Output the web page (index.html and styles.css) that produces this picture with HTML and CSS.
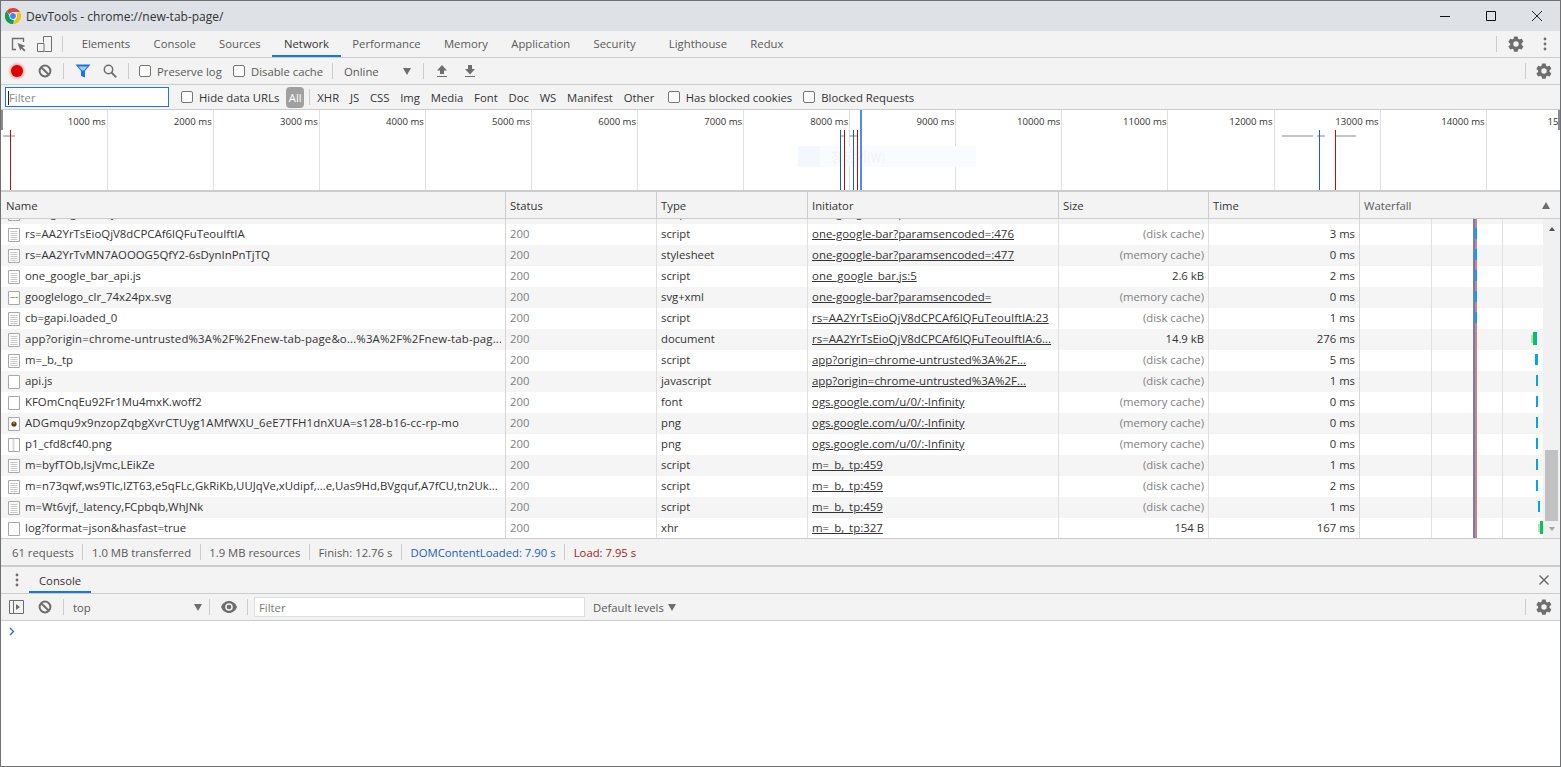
FILE: index.html
```html
<!DOCTYPE html>
<html lang="en">
<head>
<meta charset="utf-8">
<title>DevTools - chrome://new-tab-page/</title>
<link rel="stylesheet" href="styles.css">
</head>
<body>
<svg class="defs" aria-hidden="true">
  <symbol id="gear" viewBox="0 0 24 24"><path d="M19.4 13c.04-.32.07-.66.07-1s-.03-.68-.07-1l2.15-1.68c.2-.15.25-.43.12-.66l-2.04-3.53c-.12-.22-.4-.3-.62-.22l-2.54 1.02c-.53-.4-1.1-.74-1.72-1l-.39-2.7A.5.5 0 0 0 13.86 2H9.78a.5.5 0 0 0-.5.43l-.39 2.7c-.62.26-1.2.6-1.72 1L4.63 5.11c-.23-.08-.5 0-.62.22L1.97 8.86c-.13.23-.08.5.12.66L4.24 11.2c-.04.32-.08.66-.08 1s.04.68.08 1l-2.15 1.68c-.2.15-.25.43-.12.66l2.04 3.53c.12.22.4.3.62.22l2.54-1.02c.53.4 1.1.74 1.72 1l.39 2.7c.04.25.25.43.5.43h4.08c.25 0 .46-.18.5-.43l.39-2.7c.62-.26 1.2-.6 1.72-1l2.54 1.02c.23.08.5 0 .62-.22l2.04-3.53c.13-.23.08-.5-.12-.66L19.4 13zM12 15.6a3.6 3.6 0 1 1 0-7.2 3.6 3.6 0 0 1 0 7.2z"/></symbol>
  <symbol id="clear" viewBox="0 0 14 14"><circle cx="7" cy="7" r="5.4" fill="none" stroke="#6e6e6e" stroke-width="2"/><path d="M3.2 3.2l7.6 7.6" stroke="#6e6e6e" stroke-width="2"/></symbol>
  <symbol id="dots" viewBox="0 0 4 14"><circle cx="2" cy="2" r="1.4" fill="#6e6e6e"/><circle cx="2" cy="7" r="1.4" fill="#6e6e6e"/><circle cx="2" cy="12" r="1.4" fill="#6e6e6e"/></symbol>
  <symbol id="doc" viewBox="0 0 12 14"><path d="M.5.5h11v13H.5z" fill="#fff" stroke="#a8a8a8"/><path d="M2.5 3.5h7M2.5 5.5h7M2.5 7.5h7M2.5 9.5h7M2.5 11.5h7" stroke="#c8c8c8"/></symbol>
  <symbol id="blank" viewBox="0 0 12 14"><path d="M.5.5h11v13H.5z" fill="#fff" stroke="#a8a8a8"/></symbol>
  <symbol id="thin" viewBox="0 0 12 14"><path d="M.5.5h11v13H.5z" fill="#fff" stroke="#a8a8a8"/><path d="M5.5 1v12" stroke="#d8d8d8" stroke-width="2"/></symbol>
  <symbol id="svgimg" viewBox="0 0 12 14"><path d="M.5.5h11v13H.5z" fill="#fff" stroke="#a8a8a8"/><path d="M2.5 6.5h2" stroke="#5b8de8"/><path d="M4.5 6.5h2" stroke="#e06a5c"/><path d="M6.5 6.5h1.500" stroke="#e5c04a"/><path d="M8 6.500h2" stroke="#5cae6c"/></symbol>
  <symbol id="photo" viewBox="0 0 12 14"><path d="M.5.5h11v13H.5z" fill="#fff" stroke="#a8a8a8"/><circle cx="6" cy="7" r="2.600" fill="#5d3a22"/><circle cx="6" cy="6.200" r="1.100" fill="#d8742c"/></symbol>
</svg>

<div class="window">
  <header class="titlebar">
    <svg class="chrome-logo" viewBox="0 0 16 16" width="16" height="16">
      <path d="M8 0a8 8 0 0 1 6.930 4H8a4 4 0 0 0-3.700 2.500L1.600 2.900A8 8 0 0 1 8 0z" fill="#db4437"/>
      <path d="M14.930 4A8 8 0 0 1 8 16l3.460-6A4 4 0 0 0 11.500 6z" fill="#f4c20d"/>
      <path d="M8 16A8 8 0 0 1 1.600 2.900l3.460 6A4 4 0 0 0 9 11.900z" fill="#0f9d58"/>
      <circle cx="8" cy="8" r="3.600" fill="#fff"/><circle cx="8" cy="8" r="2.900" fill="#4285f4"/>
    </svg>
    <span class="title-text">DevTools - chrome://new-tab-page/</span>
    <div class="win-controls">
      <svg width="10" height="10" viewBox="0 0 10 10"><path d="M0 5.500h10" stroke="#111"/></svg>
      <svg width="10" height="10" viewBox="0 0 10 10"><path d="M.5.500h9v9h-9z" fill="none" stroke="#111"/></svg>
      <svg width="10" height="10" viewBox="0 0 10 10"><path d="M0 0l10 10M10 0L0 10" stroke="#111" stroke-width=".9"/></svg>
    </div>
  </header>

  <nav class="tabbar">
    <svg class="ic ic-inspect" width="15" height="15" viewBox="0 0 15 15"><path d="M5 12.500H1.500v-11h11V5" fill="none" stroke="#6e6e6e" stroke-width="1.300"/><path d="M6.500 6l8 3-3 1.200 3 3-1.300 1.300-3-3L9.500 14z" fill="#6e6e6e"/></svg>
    <svg class="ic ic-device" width="15" height="16" viewBox="0 0 15 16"><path d="M.5 7.500h6.500v8H.5z" fill="none" stroke="#6e6e6e"/><path d="M6.500.500h8v15H7.500" fill="none" stroke="#6e6e6e"/><path d="M6.500.500v6" stroke="#6e6e6e"/></svg>
    <i class="sep sep-tabs"></i>
    <a class="tab tab-first">Elements</a>
    <a class="tab">Console</a>
    <a class="tab">Sources</a>
    <a class="tab is-active">Network</a>
    <a class="tab">Performance</a>
    <a class="tab">Memory</a>
    <a class="tab">Application</a>
    <a class="tab">Security</a>
    <a class="tab tab-light">Lighthouse</a>
    <a class="tab">Redux</a>
    <span class="spacer"></span>
    <i class="sep sep-right"></i>
    <svg class="gear gear-main"><use href="#gear"/></svg>
    <svg class="dots-ic" width="4" height="14"><use href="#dots"/></svg>
  </nav>

  <div class="toolbar">
    <span class="record"></span>
    <svg class="clear-ic" width="14" height="14"><use href="#clear"/></svg>
    <i class="sep sep-a"></i>
    <svg class="ic-filter" width="16" height="14" viewBox="0 0 16 14"><path d="M.5.500h15L10 7v6.500l-4-1.500V7z" fill="#1a73e8"/><path d="M3.500 2.500h9L9 6.500H7z" fill="#a9cdf8"/></svg>
    <svg class="ic-search" width="14" height="14" viewBox="0 0 14 14"><circle cx="5.500" cy="5.500" r="4.200" fill="none" stroke="#6e6e6e" stroke-width="1.500"/><path d="M8.500 8.500l4.800 4.800" stroke="#6e6e6e" stroke-width="1.800"/></svg>
    <i class="sep sep-b"></i>
    <label class="check check-preserve"><i class="box"></i>Preserve log</label>
    <label class="check check-disable"><i class="box"></i>Disable cache</label>
    <i class="sep sep-c"></i>
    <span class="online">Online</span>
    <i class="tri"></i>
    <i class="sep sep-d"></i>
    <svg class="ic-up" width="12" height="12" viewBox="0 0 12 12"><path d="M6 0l5 5.500H8V9H4V5.500H1z" fill="#6e6e6e"/><path d="M1 11.500h10" stroke="#6e6e6e"/></svg>
    <svg class="ic-down" width="12" height="12" viewBox="0 0 12 12"><path d="M6 9.500L1 4h3V0h4v4h3z" fill="#6e6e6e"/><path d="M1 11.500h10" stroke="#6e6e6e"/></svg>
    <span class="spacer"></span>
    <i class="sep sep-right2"></i>
    <svg class="gear gear-side"><use href="#gear"/></svg>
  </div>

  <div class="filterbar">
    <div class="filter-input"><i class="caret"></i><span>Filter</span></div>
    <label class="check check-hide"><i class="box"></i>Hide data URLs</label>
    <span class="pill">All</span>
    <i class="sep sep-pill"></i>
    <span class="chip">XHR</span><span class="chip">JS</span><span class="chip">CSS</span><span class="chip">Img</span><span class="chip">Media</span><span class="chip">Font</span><span class="chip">Doc</span><span class="chip">WS</span><span class="chip">Manifest</span><span class="chip">Other</span>
    <label class="check check-cookies"><i class="box"></i>Has blocked cookies</label>
    <label class="check check-blocked"><i class="box"></i>Blocked Requests</label>
  </div>

  <section class="overview">
    <div class="ov-grid">
      <div class="ov-cell">1000 ms</div><div class="ov-cell">2000 ms</div><div class="ov-cell">3000 ms</div><div class="ov-cell">4000 ms</div><div class="ov-cell">5000 ms</div><div class="ov-cell">6000 ms</div><div class="ov-cell">7000 ms</div><div class="ov-cell">8000 ms</div><div class="ov-cell">9000 ms</div><div class="ov-cell">10000 ms</div><div class="ov-cell">11000 ms</div><div class="ov-cell">12000 ms</div><div class="ov-cell">13000 ms</div><div class="ov-cell">14000 ms</div><div class="ov-cell">15000 ms</div>
    </div>
    <div class="ov-ghost"><i></i><span>창 닫기(W)</span></div>
    <i class="ov-grip"></i>
    <i class="ov-grip ov-grip-r"></i>
    <i class="ov-bar" style="left:2px;width:12px"></i>
    <i class="ov-bar" style="left:839px;width:5px"></i>
    <i class="ov-bar" style="left:848px;width:9px"></i>
    <i class="ov-bar" style="left:1281px;width:31px"></i>
    <i class="ov-bar" style="left:1316px;width:8px"></i>
    <i class="ov-bar" style="left:1335px;width:20px"></i>
    <i class="ov-mark red" style="left:9px"></i>
    <i class="ov-mark blue" style="left:839px"></i>
    <i class="ov-mark red" style="left:843px"></i>
    <i class="ov-mark blue" style="left:852px"></i>
    <i class="ov-mark red" style="left:856px"></i>
    <i class="ov-now" style="left:859px"></i>
    <i class="ov-mark blue" style="left:1318px"></i>
    <i class="ov-mark red" style="left:1334px"></i>
  </section>

  <div class="net-header">
    <div class="hcell c-name">Name</div>
    <div class="hcell c-status">Status</div>
    <div class="hcell c-type">Type</div>
    <div class="hcell c-init">Initiator</div>
    <div class="hcell c-size">Size</div>
    <div class="hcell c-time">Time</div>
    <div class="hcell c-wf">Waterfall<i class="sort"></i></div>
  </div>

  <div class="net-body">
    <div class="net-rows">
      <div class="row row-clip">
        <div class="cell c-name"><svg class="fi"><use href="#doc"/></svg><span class="fname">one_google_bar.js</span></div>
        <div class="cell c-status">200</div><div class="cell c-type">script</div><div class="cell c-init"><u>one-google-bar?paramsencoded=</u></div><div class="cell c-size"></div><div class="cell c-time"></div><div class="cell c-wf"></div>
      </div>
      <div class="row">
        <div class="cell c-name"><svg class="fi"><use href="#doc"/></svg><span class="fname">rs=AA2YrTsEioQjV8dCPCAf6lQFuTeouIftIA</span></div>
        <div class="cell c-status">200</div><div class="cell c-type">script</div><div class="cell c-init"><u>one-google-bar?paramsencoded=:476</u></div><div class="cell c-size num muted">(disk cache)</div><div class="cell c-time num">3 ms</div><div class="cell c-wf"><i class="wf blue" style="left:115px"></i></div>
      </div>
      <div class="row">
        <div class="cell c-name"><svg class="fi"><use href="#doc"/></svg><span class="fname">rs=AA2YrTvMN7AOOOG5QfY2-6sDynInPnTjTQ</span></div>
        <div class="cell c-status">200</div><div class="cell c-type">stylesheet</div><div class="cell c-init"><u>one-google-bar?paramsencoded=:477</u></div><div class="cell c-size num muted">(memory cache)</div><div class="cell c-time num">0 ms</div><div class="cell c-wf"><i class="wf blue" style="left:115px"></i></div>
      </div>
      <div class="row">
        <div class="cell c-name"><svg class="fi"><use href="#doc"/></svg><span class="fname">one_google_bar_api.js</span></div>
        <div class="cell c-status">200</div><div class="cell c-type">script</div><div class="cell c-init"><u>one_google_bar.js:5</u></div><div class="cell c-size num">2.6 kB</div><div class="cell c-time num">2 ms</div><div class="cell c-wf"><i class="wf blue" style="left:115px"></i></div>
      </div>
      <div class="row">
        <div class="cell c-name"><svg class="fi"><use href="#svgimg"/></svg><span class="fname">googlelogo_clr_74x24px.svg</span></div>
        <div class="cell c-status">200</div><div class="cell c-type">svg+xml</div><div class="cell c-init"><u>one-google-bar?paramsencoded=</u></div><div class="cell c-size num muted">(memory cache)</div><div class="cell c-time num">0 ms</div><div class="cell c-wf"><i class="wf blue" style="left:115px"></i></div>
      </div>
      <div class="row">
        <div class="cell c-name"><svg class="fi"><use href="#doc"/></svg><span class="fname">cb=gapi.loaded_0</span></div>
        <div class="cell c-status">200</div><div class="cell c-type">script</div><div class="cell c-init"><u>rs=AA2YrTsEioQjV8dCPCAf6lQFuTeouIftIA:23</u></div><div class="cell c-size num muted">(disk cache)</div><div class="cell c-time num">1 ms</div><div class="cell c-wf"><i class="wf blue" style="left:115px"></i></div>
      </div>
      <div class="row">
        <div class="cell c-name"><svg class="fi"><use href="#doc"/></svg><span class="fname fname-wide">app?origin=chrome-untrusted%3A%2F%2Fnew-tab-page&amp;o...%3A%2F%2Fnew-tab-pag...</span></div>
        <div class="cell c-status">200</div><div class="cell c-type">document</div><div class="cell c-init"><u>rs=AA2YrTsEioQjV8dCPCAf6lQFuTeouIftIA:6...</u></div><div class="cell c-size num">14.9 kB</div><div class="cell c-time num">276 ms</div><div class="cell c-wf"><i class="wf stall" style="left:171px"></i><i class="wf green" style="left:173px"></i><i class="wf blue thin" style="left:176px"></i></div>
      </div>
      <div class="row">
        <div class="cell c-name"><svg class="fi"><use href="#doc"/></svg><span class="fname">m=_b,_tp</span></div>
        <div class="cell c-status">200</div><div class="cell c-type">script</div><div class="cell c-init"><u>app?origin=chrome-untrusted%3A%2F...</u></div><div class="cell c-size num muted">(disk cache)</div><div class="cell c-time num">5 ms</div><div class="cell c-wf"><i class="wf blue wide" style="left:175px"></i></div>
      </div>
      <div class="row">
        <div class="cell c-name"><svg class="fi"><use href="#blank"/></svg><span class="fname">api.js</span></div>
        <div class="cell c-status">200</div><div class="cell c-type">javascript</div><div class="cell c-init"><u>app?origin=chrome-untrusted%3A%2F...</u></div><div class="cell c-size num muted">(disk cache)</div><div class="cell c-time num">1 ms</div><div class="cell c-wf"><i class="wf blue" style="left:176px"></i></div>
      </div>
      <div class="row">
        <div class="cell c-name"><svg class="fi"><use href="#blank"/></svg><span class="fname">KFOmCnqEu92Fr1Mu4mxK.woff2</span></div>
        <div class="cell c-status">200</div><div class="cell c-type">font</div><div class="cell c-init"><u>ogs.google.com/u/0/:-Infinity</u></div><div class="cell c-size num muted">(memory cache)</div><div class="cell c-time num">0 ms</div><div class="cell c-wf"><i class="wf blue" style="left:176px"></i></div>
      </div>
      <div class="row">
        <div class="cell c-name"><svg class="fi"><use href="#photo"/></svg><span class="fname fname-wide">ADGmqu9x9nzopZqbgXvrCTUyg1AMfWXU_6eE7TFH1dnXUA=s128-b16-cc-rp-mo</span></div>
        <div class="cell c-status">200</div><div class="cell c-type">png</div><div class="cell c-init"><u>ogs.google.com/u/0/:-Infinity</u></div><div class="cell c-size num muted">(memory cache)</div><div class="cell c-time num">0 ms</div><div class="cell c-wf"><i class="wf blue" style="left:176px"></i></div>
      </div>
      <div class="row">
        <div class="cell c-name"><svg class="fi"><use href="#thin"/></svg><span class="fname">p1_cfd8cf40.png</span></div>
        <div class="cell c-status">200</div><div class="cell c-type">png</div><div class="cell c-init"><u>ogs.google.com/u/0/:-Infinity</u></div><div class="cell c-size num muted">(memory cache)</div><div class="cell c-time num">0 ms</div><div class="cell c-wf"><i class="wf blue" style="left:176px"></i></div>
      </div>
      <div class="row">
        <div class="cell c-name"><svg class="fi"><use href="#doc"/></svg><span class="fname">m=byfTOb,lsjVmc,LEikZe</span></div>
        <div class="cell c-status">200</div><div class="cell c-type">script</div><div class="cell c-init"><u>m=_b,_tp:459</u></div><div class="cell c-size num muted">(disk cache)</div><div class="cell c-time num">1 ms</div><div class="cell c-wf"><i class="wf blue" style="left:176px"></i></div>
      </div>
      <div class="row">
        <div class="cell c-name"><svg class="fi"><use href="#doc"/></svg><span class="fname">m=n73qwf,ws9Tlc,IZT63,e5qFLc,GkRiKb,UUJqVe,xUdipf,...e,Uas9Hd,BVgquf,A7fCU,tn2Uk...</span></div>
        <div class="cell c-status">200</div><div class="cell c-type">script</div><div class="cell c-init"><u>m=_b,_tp:459</u></div><div class="cell c-size num muted">(disk cache)</div><div class="cell c-time num">2 ms</div><div class="cell c-wf"><i class="wf blue" style="left:176px"></i></div>
      </div>
      <div class="row">
        <div class="cell c-name"><svg class="fi"><use href="#doc"/></svg><span class="fname">m=Wt6vjf,_latency,FCpbqb,WhJNk</span></div>
        <div class="cell c-status">200</div><div class="cell c-type">script</div><div class="cell c-init"><u>m=_b,_tp:459</u></div><div class="cell c-size num muted">(disk cache)</div><div class="cell c-time num">1 ms</div><div class="cell c-wf"><i class="wf blue" style="left:178px"></i></div>
      </div>
      <div class="row">
        <div class="cell c-name"><svg class="fi"><use href="#blank"/></svg><span class="fname">log?format=json&amp;hasfast=true</span></div>
        <div class="cell c-status">200</div><div class="cell c-type">xhr</div><div class="cell c-init"><u>m=_b,_tp:327</u></div><div class="cell c-size num">154 B</div><div class="cell c-time num">167 ms</div><div class="cell c-wf"><i class="wf stall" style="left:178px"></i><i class="wf green" style="left:180px"></i></div>
      </div>
      <div class="wf-lines"><i class="wf-grid" style="left:71px"></i><i class="wf-grid" style="left:142px"></i><i class="wf-dcl" style="left:113px"></i><i class="wf-load" style="left:115px"></i></div>
    </div>
    <div class="scrollbar">
      <i class="sb-up"></i>
      <span class="spacer"></span>
      <i class="sb-thumb"></i>
      <i class="sb-down"></i>
    </div>
  </div>

  <footer class="statusbar">
    <span class="st">61 requests</span>
    <span class="st">1.0 MB transferred</span>
    <span class="st">1.9 MB resources</span>
    <span class="st">Finish: 12.76 s</span>
    <span class="st st-blue">DOMContentLoaded: 7.90 s</span>
    <span class="st st-red">Load: 7.95 s</span>
  </footer>

  <div class="drawer-tabs">
    <svg class="dots-drawer" width="4" height="14"><use href="#dots"/></svg>
    <a class="drawer-tab">Console</a>
    <span class="spacer"></span>
    <svg class="drawer-close" width="10" height="10" viewBox="0 0 10 10"><path d="M.5.500l9 9M9.500.500l-9 9" stroke="#6e6e6e" stroke-width="1.500"/></svg>
  </div>

  <div class="console-bar">
    <svg class="ic-side" width="15" height="14" viewBox="0 0 15 14"><path d="M.5.500h14v13H.5z" fill="none" stroke="#6e6e6e"/><path d="M4.500 1v12" stroke="#6e6e6e"/><path d="M7 4l4 3-4 3z" fill="#6e6e6e"/></svg>
    <svg class="clear-ic clear-console" width="14" height="14"><use href="#clear"/></svg>
    <i class="sep sep-a"></i>
    <span class="ctx">top</span>
    <i class="tri tri-ctx"></i>
    <i class="sep sep-e"></i>
    <svg class="ic-eye" width="16" height="12" viewBox="0 0 16 12"><path d="M8 0c3.600 0 6.600 2.400 8 6-1.400 3.600-4.400 6-8 6S1.400 9.600 0 6c1.400-3.600 4.400-6 8-6z" fill="#6e6e6e"/><circle cx="8" cy="6" r="3.800" fill="#f3f3f3"/><circle cx="8" cy="6" r="2.300" fill="#6e6e6e"/></svg>
    <i class="sep sep-f"></i>
    <div class="console-filter">Filter</div>
    <span class="levels">Default levels</span>
    <i class="tri tri-levels"></i>
    <span class="spacer"></span>
    <i class="sep sep-right2"></i>
    <svg class="gear gear-side"><use href="#gear"/></svg>
  </div>

  <main class="console-body">
    <svg class="prompt" width="6" height="9" viewBox="0 0 6 9"><path d="M1 1l3.500 3.500L1 8" fill="none" stroke="#2f6fde" stroke-width="1.400"/></svg>
  </main>
</div>
</body>
</html>
```

FILE: styles.css
```css
* { box-sizing: border-box; }
html, body { margin: 0; padding: 0; }
body { background: #fff; font-family: "Open Sans", "Liberation Sans", sans-serif; font-size: 11.3px; color: #333; overflow: hidden; }
.defs { display: none; }
i { display: block; font-style: normal; }
.spacer { flex: 1 1 auto; }

.window { width: 1561px; height: 767px; border: 1px solid #6e7072; display: flex; flex-direction: column; }

.titlebar { flex: 0 0 30px; background: #dee1e6; display: flex; align-items: center; padding-left: 4px; }
.chrome-logo { flex: none; }
.title-text { margin-left: 5px; font-size: 12px; color: #333; }
.win-controls { margin-left: auto; display: flex; gap: 36px; padding-right: 18px; }

.tabbar, .toolbar, .console-bar, .drawer-tabs { display: flex; align-items: center; background: #f3f3f3; border-bottom: 1px solid #ccc; }
.tabbar { flex: 0 0 27px; }
.toolbar { flex: 0 0 27px; }
.sep { flex: none; width: 1px; height: 16px; background: #ccc; }

.ic-inspect { margin-left: 10px; flex: none; }
.ic-device { margin-left: 11px; flex: none; }
.sep-tabs { margin-left: 10px; }
.tab { height: 26px; line-height: 26px; padding: 0 11.65px; color: #5a5a5a; border-bottom: 2px solid transparent; white-space: nowrap; }
.tab-first { margin-left: 7px; }
.tab-light { margin-left: 10px; }
.tab.is-active { color: #333; border-bottom-color: #1a73e8; }
.sep-right { margin-right: 10px; }
.gear { fill: #6e6e6e; flex: none; width: 18px; height: 18px; }
.dots-ic { margin-left: 18px; margin-right: 13px; flex: none; }

.record { flex: none; width: 12px; height: 12px; margin-left: 10px; border-radius: 50%; background: #e00000; box-shadow: 0 0 3px 1px rgba(220,0,0,.45); }
.clear-ic { flex: none; margin-left: 15px; }
.sep-a { margin-left: 11px; }
.ic-filter { flex: none; margin-left: 11px; }
.ic-search { flex: none; margin-left: 12px; }
.sep-b { margin-left: 11px; }
.check { display: flex; align-items: center; white-space: nowrap; color: #5a5a5a; flex: none; }
.box { flex: none; width: 12px; height: 12px; margin-right: 6px; border: 1px solid #767676; border-radius: 2px; background: #fff; }
.check-preserve { margin-left: 10px; width: 94px; }
.check-disable { width: 99px; }
.online { margin-left: 11px; width: 59px; color: #5a5a5a; }
.tri { flex: none; width: 0; height: 0; border-left: 4px solid transparent; border-right: 4px solid transparent; border-top: 7px solid #6e6e6e; }
.sep-d { margin-left: 12px; }
.ic-up { flex: none; margin-left: 12px; }
.ic-down { flex: none; margin-left: 16px; }
.sep-right2 { margin-right: 9px; }
.gear-side { margin-right: 7px; }

.filterbar { flex: 0 0 25px; display: flex; align-items: center; background: #f3f3f3; border-bottom: 1px solid #ccc; }
.filter-input { flex: none; margin-left: 4px; width: 164px; height: 20px; border: 1px solid #1a73e8; background: #fff; display: flex; align-items: center; padding-left: 2px; padding-top: 1px; color: #8a8a8a; }
.caret { width: 1px; height: 14px; background: #222; }
.check-hide { margin-left: 12px; }
.check-hide, .check-cookies, .check-blocked { color: #333; }
.pill { flex: none; margin-left: 7px; width: 18px; height: 21px; line-height: 21px; text-align: center; color: #fff; background: #a0a0a0; border-radius: 4px; }
.sep-pill { margin-left: 5px; }
.chip { flex: none; padding: 0 5.4px; white-space: nowrap; color: #333; }
.sep-pill + .chip { margin-left: 3px; padding-left: 4px; }
.check-cookies { margin-left: 8px; }
.check-blocked { margin-left: 11px; }

.overview { flex: 0 0 80px; position: relative; overflow: hidden; background: #fff; }
.ov-grid { display: flex; height: 100%; width: 1700px; padding-left: .6px; }
.ov-cell { flex: 0 0 106.08px; height: 100%; border-right: 1px solid #e0e0e0; text-align: right; padding: 5px 1px 0 0; font-size: 9.6px; line-height: 14px; color: #333; white-space: nowrap; }
.ov-ghost { position: absolute; left: 797px; top: 36px; width: 178px; height: 21px; background: #f8fbff; display: flex; align-items: center; color: #f1f3f6; font-size: 12px; }
.ov-ghost i { width: 22px; height: 100%; background: #f3f8ff; margin-right: 11px; }
.ov-ghost span { font-family: "Noto Sans CJK KR", sans-serif; }
.ov-grip { position: absolute; left: 0; top: 0; width: 2px; height: 20px; background: #8a8a8a; }
.ov-grip-r { left: auto; right: 0; }
.ov-bar { position: absolute; top: 25px; height: 1px; background: #c4c4c4; box-shadow: 0 1px 0 #c4c4c4; }
.ov-mark { position: absolute; top: 20px; bottom: 0; width: 1px; }
.ov-mark.red { background: #b01010; }
.ov-mark.blue { background: #1a5fc0; }
.ov-now { position: absolute; top: 0; bottom: 0; width: 2px; background: #4d8bf5; }

.net-header { flex: 0 0 29px; display: flex; align-items: flex-start; background: #f3f3f3; border-top: 2px solid #ccc; border-bottom: 1px solid #ccc; }
.c-name { flex: 0 0 505px; }
.c-status { flex: 0 0 151px; }
.c-type { flex: 0 0 151px; }
.c-init { flex: 0 0 251px; }
.c-size { flex: 0 0 150px; }
.c-time { flex: 0 0 151px; }
.c-wf { flex: 1 1 auto; }
.hcell { height: 26px; padding-left: 4px; padding-top: 1px; line-height: 26px; border-right: 1px solid #ccc; color: #333; white-space: nowrap; position: relative; }
.hcell.c-name { padding-left: 5px; }
.hcell.c-wf { border-right: 0; color: #5a5a5a; }
.sort { position: absolute; top: 10px; right: 10px; width: 0; height: 0; border-left: 4px solid transparent; border-right: 4px solid transparent; border-bottom: 7px solid #6e6e6e; }

.net-body { flex: 0 0 320px; display: flex; overflow: hidden; border-bottom: 1px solid #ccc; }
.net-rows { flex: 1 1 auto; min-width: 0; position: relative; overflow: hidden; }
.row { display: flex; height: 21px; background: #fff; }
.row:nth-child(odd) { background: #f5f5f5; }
.row-clip { margin-top: -16px; }
.cell { padding: 0 4px; line-height: 20px; border-right: 1px solid #e0e0e0; white-space: nowrap; overflow: hidden; position: relative; color: #333; }
.cell.c-status { color: #808080; }
.cell.c-name { padding-left: 7px; display: flex; align-items: center; border-right-color: #d6d6d6; }
.cell.c-wf { border-right: 0; border-left: 1px solid #d8d8d8; overflow: visible; margin-left: -1px; }
.cell.c-init { font-size: 11.45px; }
.num { text-align: right; }
.muted { color: #808080; }
.cell u { text-decoration: underline; color: #333; }
.fi { flex: none; width: 12px; height: 14px; margin-right: 5px; }
.fname { overflow: hidden; font-size: 11.4px; margin-top: -2px; }
.fname-wide { letter-spacing: .16px; }
.wf { position: absolute; top: 4px; height: 11px; width: 2px; z-index: 1; }
.wf.blue { background: #00a6f4; }
.wf.wide { width: 3px; }
.wf.thin { width: 1px; top: 3px; height: 13px; }
.wf.green { background: #00c853; width: 3px; top: 3px; height: 13px; }
.wf.stall { background: #cfcfcf; width: 2px; top: 6px; height: 8px; }
.wf-lines { position: absolute; left: 1359px; right: 0; top: 0; bottom: 0; pointer-events: none; }
.wf-grid { position: absolute; top: 0; bottom: 0; width: 1px; background: #e0e0e0; }
.wf-dcl { position: absolute; top: 0; bottom: 0; width: 2px; background: #6f7fb8; }
.wf-load { position: absolute; top: 0; bottom: 0; width: 1.5px; background: #d08080; }

.scrollbar { flex: 0 0 17px; background: #f1f1f1; display: flex; flex-direction: column; align-items: center; position: relative; }
.sb-up { margin-top: 8px; width: 0; height: 0; border-left: 3.5px solid transparent; border-right: 3.5px solid transparent; border-bottom: 4px solid #505050; }
.sb-thumb { width: 13px; height: 71px; background: #c1c1c1; }
.sb-down { margin-top: 6px; margin-bottom: 7px; width: 0; height: 0; border-left: 3.5px solid transparent; border-right: 3.5px solid transparent; border-top: 4px solid #a3a3a3; }

.statusbar { flex: 0 0 26px; display: flex; align-items: center; background: #f3f3f3; }
.st { flex: none; height: 16px; line-height: 17px; padding: 0 8.6px; border-right: 1px solid #ccc; color: #5a5a5a; white-space: nowrap; }
.st:first-child { padding-left: 11px; }
.st:last-child { border-right: 0; }
.st-blue { color: #1a5fc0; }
.st-red { color: #a51c1c; }

.drawer-tabs { flex: 0 0 29px; border-top: 2px solid #ccc; }
.dots-drawer { flex: none; margin-left: 14px; }
.drawer-tab { margin-left: 10px; height: 26px; line-height: 27px; padding: 0 10px; border-bottom: 2px solid #1a73e8; color: #333; }
.drawer-close { flex: none; margin-right: 11px; }

.console-bar { flex: 0 0 27px; }
.ic-side { flex: none; margin-left: 8px; }
.clear-console { margin-left: 14px; }
.ctx { flex: 0 0 121px; margin-left: 9px; color: #5a5a5a; }
.sep-e { margin-left: 7px; }
.ic-eye { flex: none; margin-left: 11px; }
.sep-f { margin-left: 10px; }
.console-filter { flex: none; margin-left: 6px; width: 331px; height: 20px; line-height: 19px; padding-left: 4px; background: #fff; border: 1px solid #dedede; color: #7a7a7a; }
.levels { margin-left: 8px; color: #5a5a5a; white-space: nowrap; }
.tri-levels { margin-left: 4px; }

.console-body { flex: 1 1 auto; background: #fff; padding: 6px 0 0 8px; }
.prompt { display: block; }
```
